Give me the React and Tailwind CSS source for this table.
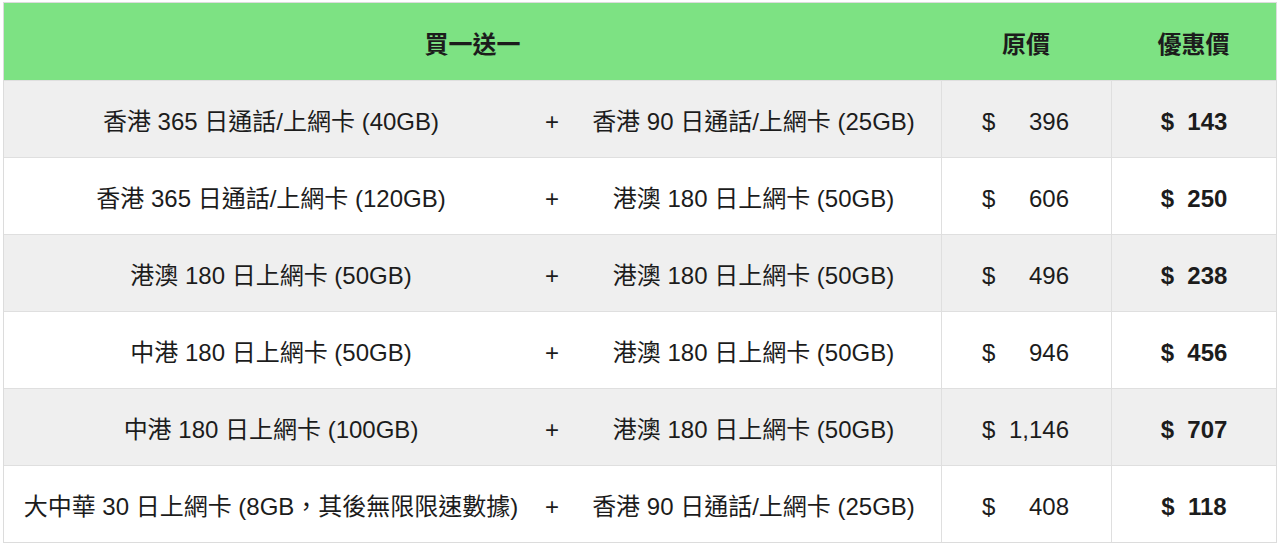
const rows = [
  { a: "香港 365 日通話/上網卡 (40GB)", b: "香港 90 日通話/上網卡 (25GB)", orig: "396", deal: "143" },
  { a: "香港 365 日通話/上網卡 (120GB)", b: "港澳 180 日上網卡 (50GB)", orig: "606", deal: "250" },
  { a: "港澳 180 日上網卡 (50GB)", b: "港澳 180 日上網卡 (50GB)", orig: "496", deal: "238" },
  { a: "中港 180 日上網卡 (50GB)", b: "港澳 180 日上網卡 (50GB)", orig: "946", deal: "456" },
  { a: "中港 180 日上網卡 (100GB)", b: "港澳 180 日上網卡 (50GB)", orig: "1,146", deal: "707" },
  { a: "大中華 30 日上網卡 (8GB，其後無限限速數據)", b: "香港 90 日通話/上網卡 (25GB)", orig: "408", deal: "118" },
];

export default function App() {
  return (
    <div
      className="bg-white w-[1280px] h-[545px] pt-[2px] pl-[3px] text-[24px] text-[#1c1c1c]"
      style={{ fontFamily: '"Liberation Sans", "Noto Sans CJK TC", sans-serif' }}
    >
      <div className="w-[1274px] border border-[#dcdcdc]">
        {/* header */}
        <div className="grid grid-cols-[937px_170px_165px] h-[77px] pt-[6px] bg-[#7de283] font-bold items-center text-center">
          <div>買一送一</div>
          <div>原價</div>
          <div>優惠價</div>
        </div>
        {rows.map((r, i) => (
          <div
            key={i}
            className={`grid grid-cols-[534px_28px_375px_170px_165px] h-[77px] items-stretch border-t border-[#dfdfdf] ${i % 2 === 0 ? "bg-[#efefef]" : "bg-white"}`}
          >
            <div className="flex items-center justify-center whitespace-nowrap pt-[6px]">{r.a}</div>
            <div className="flex items-center justify-center pt-[6px]">+</div>
            <div className="flex items-center justify-center whitespace-nowrap pt-[6px]">{r.b}</div>
            <div className="flex items-center justify-between pl-[40px] pr-[42px] pt-[6px] border-l border-[#dfdfdf]">
              <span>$</span>
              <span>{r.orig}</span>
            </div>
            <div className="flex items-center justify-center font-bold pt-[6px] border-l border-[#dfdfdf]">
              $&nbsp;&nbsp;{r.deal}
            </div>
          </div>
        ))}
      </div>
    </div>
  );
}
